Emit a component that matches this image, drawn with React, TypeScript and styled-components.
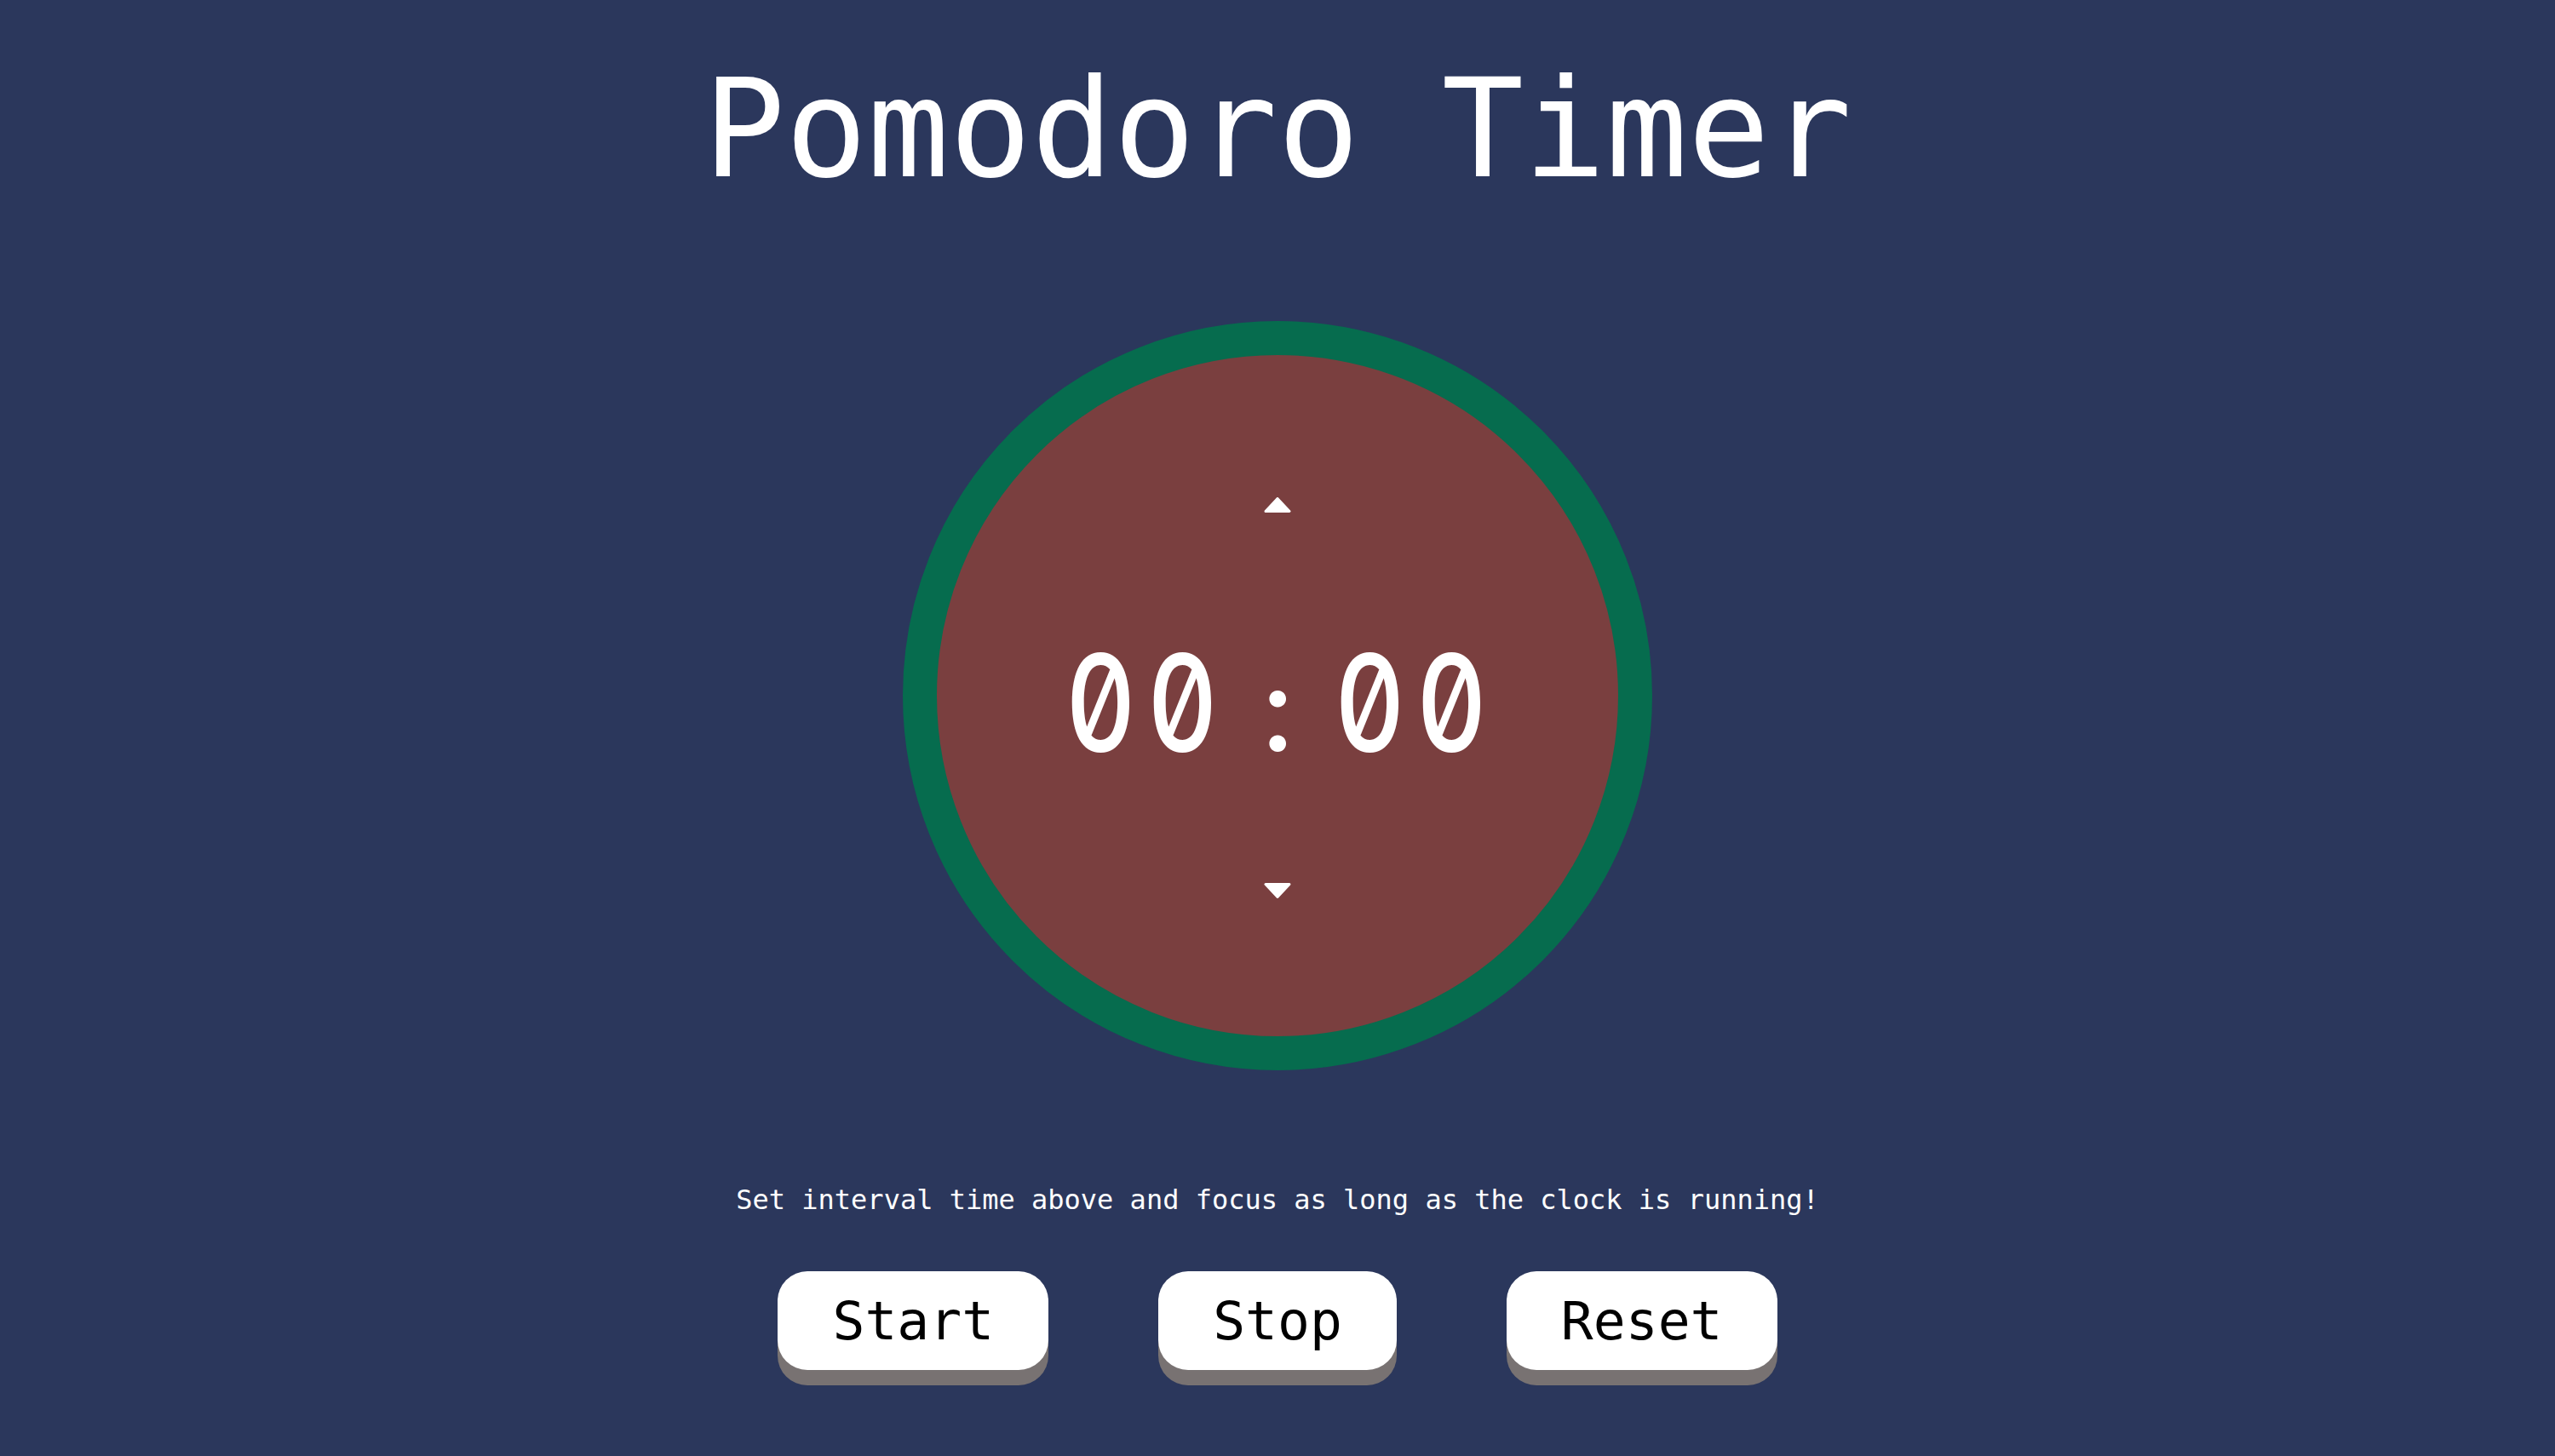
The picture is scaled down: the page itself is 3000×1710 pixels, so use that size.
import React from "react";
import styled, { createGlobalStyle } from "styled-components";

const GlobalStyle = createGlobalStyle`
  html, body {
    margin: 0;
    padding: 0;
    background: #2b375c;
  }
  body {
    font-family: "DejaVu Sans Mono", "Liberation Mono", monospace;
    color: #ffffff;
  }
`;

const Page = styled.main`
  min-height: 1710px;
  box-sizing: border-box;
  padding-top: 72px;
  display: flex;
  flex-direction: column;
  align-items: center;
`;

const Title = styled.h1`
  margin: 0;
  font-size: 160px;
  line-height: 160px;
  font-weight: 400;
  white-space: pre;
`;

const Clock = styled.section`
  margin-top: 145px;
  width: 880px;
  height: 880px;
  box-sizing: border-box;
  border: 40px solid #066c4e;
  border-radius: 50%;
  background: #7a3f3f;
  padding-top: 4px;
  display: flex;
  flex-direction: column;
  align-items: center;
  justify-content: center;
`;

const ArrowButton = styled.button<{ $down?: boolean }>`
  border: 0;
  padding: 0;
  background: none;
  cursor: pointer;
  display: block;
  width: 32px;
  height: 18px;
  margin-bottom: ${(p) => (p.$down ? "0" : "144px")};
  margin-top: ${(p) => (p.$down ? "134px" : "0")};

  svg {
    display: block;
  }
`;

const TimeRow = styled.div`
  display: flex;
  align-items: baseline;
  margin-right: 8px;
  font-family: Inter, "DejaVu Sans Mono", monospace;
  font-feature-settings: "tnum" 1, "zero" 1;
  font-weight: 500;
  font-size: 158px;
  line-height: 157px;
  height: 157px;
`;

const Digit = styled.span`
  display: inline-block;
  width: 96px;
  text-align: center;
  transform: scaleX(0.81);
`;

const Colon = styled.span`
  display: inline-block;
  width: 124px;
  box-sizing: border-box;
  padding-left: 8px;
  text-align: center;
  font-size: 136px;
  font-weight: 500;
`;

const Hint = styled.p`
  margin: 136px 0 0;
  font-size: 32px;
  line-height: 32px;
`;

const ButtonRow = styled.div`
  margin-top: 68px;
  display: flex;
  gap: 129px;
`;

const ControlButton = styled.button`
  height: 116px;
  padding: 0 64px;
  border: 0;
  border-radius: 35px;
  background: #ffffff;
  color: #000000;
  font-family: "DejaVu Sans Mono", "Liberation Mono", monospace;
  font-size: 63px;
  box-shadow: 0 18px 0 #787272;
  cursor: pointer;
`;

const Caret = ({ down }: { down?: boolean }) => (
  <svg width="32" height="18" viewBox="0 0 32 18">
    <path
      d={down ? "M2 1.5 L30 1.5 L16 16.5 Z" : "M2 16.5 L16 1.5 L30 16.5 Z"}
      fill="#ffffff"
      stroke="#ffffff"
      strokeWidth="3"
      strokeLinejoin="round"
    />
  </svg>
);

const TwoDigits = ({ value }: { value: string }) => (
  <>
    {value.split("").map((ch, idx) => (
      <Digit key={idx}>{ch}</Digit>
    ))}
  </>
);

const App: React.FC = () => {
  const minutes = "00";
  const seconds = "00";
  return (
    <>
      <GlobalStyle />
      <Page>
        <Title>Pomodoro Timer</Title>
        <Clock>
          <ArrowButton aria-label="increase">
            <Caret />
          </ArrowButton>
          <TimeRow>
            <TwoDigits value={minutes} />
            <Colon>:</Colon>
            <TwoDigits value={seconds} />
          </TimeRow>
          <ArrowButton $down aria-label="decrease">
            <Caret down />
          </ArrowButton>
        </Clock>
        <Hint>Set interval time above and focus as long as the clock is running!</Hint>
        <ButtonRow>
          <ControlButton>Start</ControlButton>
          <ControlButton>Stop</ControlButton>
          <ControlButton>Reset</ControlButton>
        </ButtonRow>
      </Page>
    </>
  );
};

export default App;
